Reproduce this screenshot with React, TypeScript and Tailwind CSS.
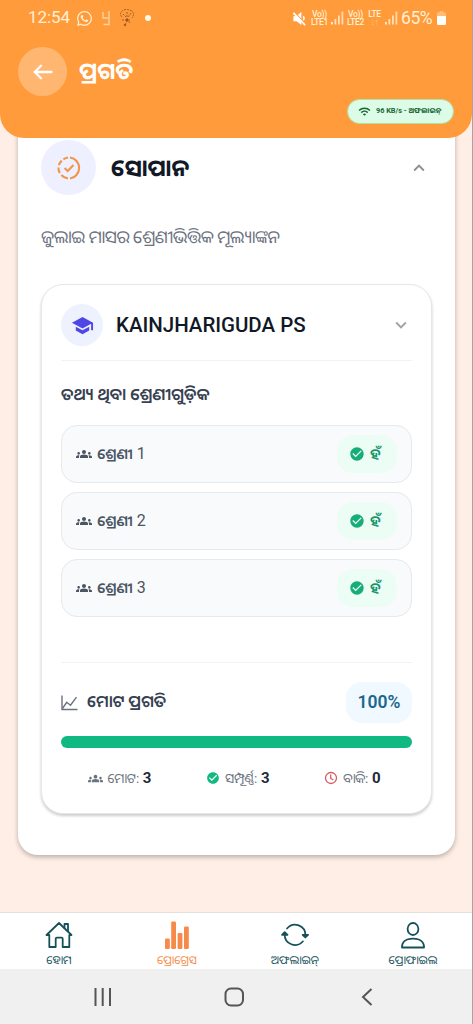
import React from "react";
import { MdCheckCircle, MdExpandLess, MdExpandMore, MdGroups, MdSchool, MdWifi } from "react-icons/md";
import { FaWhatsapp } from "react-icons/fa";

interface IconProps {
  className?: string;
}

interface NavItem {
  name: string;
  icon: React.FC<IconProps>;
  color: string;
}

function BackIcon({ className }: IconProps) {
  return (
    <svg viewBox="0 0 20 20" className={className} fill="none" stroke="currentColor" strokeWidth="2.3" strokeLinecap="round" strokeLinejoin="round">
      <path d="M18.5 10h-17M8 3.8 1.800 10 8 16.2" />
    </svg>
  );
}

function MutedIcon({ className }: IconProps) {
  return (
    <svg viewBox="0 0 16 16" className={className}>
      <path d="M1.5 5.2h3.3L10 1v14l-5.2-4H1.5z" fill="currentColor" />
      <path d="M12 5.5q1.8 2 0 4.5" fill="none" stroke="currentColor" strokeWidth="1.5" />
      <path d="M2.5 1.2 15 14.2" fill="none" stroke="#ff9b3b" strokeWidth="1.2" />
      <path d="m1.5 2 12.5 13" fill="none" stroke="currentColor" strokeWidth="1.8" />
    </svg>
  );
}

function SignalIcon({ className }: IconProps) {
  return (
    <svg viewBox="0 0 13 14" className={className} fill="currentColor">
      <rect x="0" y="11" width="1.8" height="2.5" />
      <rect x="3.5" y="8" width="1.8" height="5.5" opacity="0.85" />
      <rect x="7" y="4.5" width="1.8" height="9" opacity="0.8" />
      <rect x="10.5" y="0.5" width="1.8" height="13" opacity="0.75" />
    </svg>
  );
}

function ProgressCheckIcon({ className }: IconProps) {
  return (
    <svg viewBox="0 0 24 24" className={className} fill="none" stroke="currentColor" strokeWidth="2.1">
      <path d="M13 1.5a10.6 10.6 0 0 1 0 21" />
      <path d="M11 1.5a10.5 10.5 0 0 0-4.6 1.8M4.8 4.6A10.7 10.7 0 0 0 1.8 9.2M1.4 11.5A10.7 10.7 0 0 0 2.8 17M4.3 19A10.7 10.7 0 0 0 11 22.5" />
      <path d="m7.6 12 3.1 3.1 5.8-6" />
    </svg>
  );
}

function LineChartIcon({ className }: IconProps) {
  return (
    <svg viewBox="0 0 17 16" className={className} fill="none" stroke="currentColor" strokeWidth="1.4">
      <path d="M1 .5v14h15.5" />
      <path d="m1.5 13.5 4.2-6.2 3.8 2.9 6-8" />
    </svg>
  );
}

function ClockIcon({ className }: IconProps) {
  return (
    <svg viewBox="0 0 14 14" className={className} fill="none" stroke="currentColor" strokeWidth="1.3">
      <circle cx="7" cy="7" r="5.5" />
      <path d="M6.7 3.5v3.7L9.3 9" />
    </svg>
  );
}

function HomeIcon({ className }: IconProps) {
  return (
    <svg viewBox="0 0 28 28" className={className} fill="none" stroke="currentColor" strokeWidth="1.8" strokeLinejoin="round" strokeLinecap="round">
      <path d="M1.5 14 14 2l12.5 12h-2.2v12h-6.6v-8.2q0-1.2-1.2-1.2h-4.6q-1.2 0-1.2 1.2V26H4.3V14z" />
      <path d="M19.5 7V3H23v7" />
    </svg>
  );
}

function BarsIcon({ className }: IconProps) {
  return (
    <svg viewBox="0 0 28 28" className={className} fill="currentColor">
      <rect x="2" y="17.5" width="4.8" height="10.5" rx="1.2" />
      <rect x="8.2" y="0.5" width="4.8" height="27.5" rx="1.2" />
      <rect x="14.6" y="12" width="4.8" height="16" rx="1.2" />
      <rect x="21" y="5.5" width="4.8" height="22.5" rx="1.2" />
    </svg>
  );
}

function SyncIcon({ className }: IconProps) {
  return (
    <svg viewBox="0 0 28 28" className={className} fill="none" stroke="currentColor" strokeWidth="1.7" strokeLinecap="round" strokeLinejoin="round">
      <path d="M6 7.5A10.4 10.4 0 0 1 24.4 14.5" />
      <path d="M22 20.3A10.4 10.4 0 0 1 3.7 13" />
      <path d="m21.6 13.8 2.7 2.7 2.8-2.7zM1 13.8l2.7-2.7 2.8 2.7z" fill="currentColor" />
    </svg>
  );
}

function UserIcon({ className }: IconProps) {
  return (
    <svg viewBox="0 0 28 28" className={className} fill="none" stroke="currentColor" strokeWidth="1.8" strokeLinejoin="round">
      <ellipse cx="14" cy="8" rx="5.4" ry="6" />
      <path d="M3 26.5v-1.2q.6-5.2 5.2-6.8 5.8-1.8 11.6 0 4.6 1.6 5.2 6.8v1.2z" />
    </svg>
  );
}

const classes = ["1", "2", "3"];

const navItems: NavItem[] = [
  { name: "ହୋମ", icon: HomeIcon, color: "text-[#16505a]" },
  { name: "ପ୍ରୋଗ୍ରେସ", icon: BarsIcon, color: "text-[#f68a48]" },
  { name: "ଅଫଲାଇନ୍", icon: SyncIcon, color: "text-[#16505a]" },
  { name: "ପ୍ରୋଫାଇଲ", icon: UserIcon, color: "text-[#16505a]" },
];

function StatusBar() {
  return (
    <div className="flex h-9 items-center pl-7 pr-[26px] text-[#fff0d4]">
      <span className="w-[43px] text-[17px] tracking-[-0.1px]">12:54</span>
      <FaWhatsapp className="ml-[5px] size-[17px]" />
      <svg viewBox="0 0 10 16" className="ml-2 h-4 w-2.5" fill="none" stroke="#ffd09a" strokeWidth="1.5">
        <path d="M2 2v6h6M8 1v13.5H2.5" />
      </svg>
      <svg viewBox="0 0 16 18" className="ml-2 h-[18px] w-4" fill="none" stroke="#a85f24" strokeWidth="1">
        <path d="M3 8Q0 5 3 2q4-3 10 0 3 3 0 7M4 5l3 3M12 4 9 8M8 3v8M3 11h9M6 16l2-4 4 2" strokeDasharray="2 1" />
        <circle cx="8" cy="11" r="1" fill="#42240f" />
        <circle cx="6" cy="16" r=".8" fill="#42240f" />
      </svg>
      <span className="ml-2.5 size-1.5 rounded-full bg-[#fff7e8]" />
      <div className="ml-auto flex items-center">
        <MutedIcon className="mr-[3px] size-[15px] text-white" />
        <div className="w-[19px] whitespace-nowrap text-center text-[8.5px] font-medium leading-[8px] tracking-[-0.3px]">
          <div>Vo))</div>
          <div>LTE1</div>
        </div>
        <SignalIcon className="ml-0.5 h-3.5 w-[13px]" />
        <div className="ml-0.5 w-[19px] whitespace-nowrap text-center text-[8.5px] font-medium leading-[8px] tracking-[-0.3px]">
          <div>Vo))</div>
          <div>LTE2</div>
        </div>
        <div className="ml-0.5 w-[15px] text-center text-[8.5px] font-medium leading-[8px] tracking-[-0.3px]">
          <div>LTE</div>
          <div className="text-[#ffc98f]">↓↑</div>
        </div>
        <SignalIcon className="ml-[3px] h-3.5 w-[13px]" />
        <span className="ml-[3px] w-[34px] text-[17.5px] tracking-[-0.4px]">65%</span>
        <svg viewBox="0 0 9 14" className="ml-0.5 h-3.5 w-[9px]" fill="currentColor">
          <path d="M2.5 0h4v1.5H9V6H0V1.5h2.5z" opacity=".4" />
          <path d="M0 5h9v7.5q0 1.5-1.5 1.5h-6Q0 14 0 12.500z" fill="#fff" />
        </svg>
      </div>
    </div>
  );
}

function Header() {
  return (
    <header className="relative z-10 h-[138px] shrink-0 rounded-b-[24px] bg-[#ff9b3b]">
      <StatusBar />
      <div className="flex items-center pl-[18px] pt-[11px] text-white">
        <div className="flex size-[49px] items-center justify-center rounded-full bg-[#ffb670]">
          <BackIcon className="size-5" />
        </div>
        <h1 className="-mt-0.5 ml-3 whitespace-nowrap text-[23.3px] font-bold leading-9">ପ୍ରଗତି</h1>
      </div>
      <div className="mr-[18px] mt-[3px] flex justify-end">
        <div className="flex h-[25px] w-[107px] items-center rounded-full border border-[#b4dfa0] bg-[#dcfce7] pl-[10px] text-[#166534]">
          <MdWifi className="size-[13px]" />
          <span className="ml-[5px] whitespace-nowrap text-[7.3px] font-bold">96 KB/s - ଅଫଲାଇନ୍</span>
        </div>
      </div>
    </header>
  );
}

function ClassRow({ label }: { label: string }) {
  return (
    <div className="flex h-[58px] items-center rounded-2xl border border-[#e6e9ed] bg-[#f8fafc] pl-3.5 pr-3.5 text-[#4b5563]">
      <MdGroups className="size-4" />
      <span className="ml-[5px] whitespace-nowrap text-[14.6px] font-semibold leading-6">ଶ୍ରେଣୀ</span>
      <span className="ml-1 text-base">{label}</span>
      <div className="ml-auto flex h-[38px] w-[60px] items-center rounded-2xl bg-[#ecfdf5] pl-3">
        <MdCheckCircle className="size-4 text-[#17ad7b]" />
        <span className="ml-[5px] text-[14.6px] font-semibold leading-6 text-[#13946a]">ହଁ</span>
      </div>
    </div>
  );
}

function SchoolCard() {
  return (
    <section className="mt-[29px] h-[530px] rounded-[22px] border border-[#e7e7e9] bg-white px-[19px] shadow-[0_2px_3px_rgba(0,0,0,0.2)]">
      <div className="flex h-[76px] items-center border-b border-[#f1f2f4] pt-[5px]">
        <div className="flex size-[42px] items-center justify-center rounded-full bg-[#eef2ff]">
          <MdSchool className="size-[23px] text-[#4f46e5]" />
        </div>
        <span className="ml-[13px] whitespace-nowrap text-[20.5px] font-medium tracking-[-0.03px] text-[#111827]">KAINJHARIGUDA PS</span>
        <MdExpandMore className="ml-auto size-[22px] text-[#a3a3a3]" />
      </div>
      <div className="flex h-16 items-center pt-1 text-[#374151]">
        <h3 className="whitespace-nowrap text-[16.7px] font-semibold leading-7">ତଥ୍ୟ ଥିବା ଶ୍ରେଣୀଗୁଡ଼ିକ</h3>
      </div>
      <div className="flex flex-col gap-[9px]">
        {classes.map((item) => (
          <ClassRow key={item} label={item} />
        ))}
      </div>
      <div className="mt-[45px] border-t border-[#f1f2f4] pt-[19px]">
        <div className="flex h-[41px] items-center">
          <LineChartIcon className="h-4 w-[17px] text-[#6b7280]" />
          <span className="-mt-0.5 ml-[9px] whitespace-nowrap text-[16.4px] font-semibold leading-7 text-[#374151]">ମୋଟ ପ୍ରଗତି</span>
          <div className="ml-auto flex h-[41px] w-[66px] items-center justify-center rounded-2xl bg-[#f0f9ff] text-[17.5px] font-semibold text-[#1c678d]">
            100%
          </div>
        </div>
        <div className="mt-[13px] h-3 rounded-full bg-[#10b981]" />
        <div className="mt-[15px] flex h-[30px] items-center justify-around pr-1 text-[#6b7280]">
          <div className="flex items-center">
            <MdGroups className="size-[15px]" />
            <span className="ml-1 whitespace-nowrap text-[13.5px] leading-6 tracking-[-0.4px]">ମୋଟ:</span>
            <span className="ml-1 text-[15px] font-bold text-[#1f2937]">3</span>
          </div>
          <div className="flex items-center">
            <MdCheckCircle className="size-3.5 text-[#10b981]" />
            <span className="ml-[5px] whitespace-nowrap text-[13.5px] leading-6 tracking-[-0.4px]">ସମ୍ପୂର୍ଣ୍ଣ:</span>
            <span className="ml-1 text-[15px] font-bold text-[#1f2937]">3</span>
          </div>
          <div className="flex items-center">
            <ClockIcon className="size-3.5 text-[#d75b62]" />
            <span className="ml-[5px] whitespace-nowrap text-[13.5px] leading-6 tracking-[-0.4px]">ବାକି:</span>
            <span className="ml-1 text-[15px] font-bold text-[#1f2937]">0</span>
          </div>
        </div>
      </div>
    </section>
  );
}

function BottomNav() {
  return (
    <nav className="grid h-[57px] shrink-0 grid-cols-4 border-t border-[#e3e0df] bg-white">
      {navItems.map((item) => (
        <div key={item.name} className={`flex flex-col items-center pt-2 ${item.color}`}>
          <item.icon className="size-7 shrink-0" />
          <span className="mt-0.5 whitespace-nowrap text-[11.6px] leading-[18px]">{item.name}</span>
        </div>
      ))}
    </nav>
  );
}

function SystemBar() {
  return (
    <div className="flex h-[55px] shrink-0 items-center bg-[#f0f0f0] pl-[94px] text-[#555]">
      <svg viewBox="0 0 18 18" className="size-[18px]" fill="none" stroke="currentColor" strokeWidth="2">
        <path d="M1.5 0v18M8.7 0v18M16 0v18" />
      </svg>
      <svg viewBox="0 0 20 20" className="ml-28 size-5" fill="none" stroke="currentColor" strokeWidth="2">
        <rect x="1.5" y="1.5" width="17.5" height="17" rx="5.5" />
      </svg>
      <svg viewBox="0 0 12 18" className="ml-[117px] h-[18px] w-3" fill="none" stroke="currentColor" strokeWidth="2">
        <path d="M10.5 1 2 9l8.5 8" />
      </svg>
    </div>
  );
}

export default function App() {
  return (
    <div className="flex h-[1024px] w-[473px] flex-col overflow-hidden border-r border-[#aaa3a0] bg-[#feeee5] font-[Roboto,'Noto_Sans_Oriya','Noto_Sans',sans-serif]">
      <Header />
      <main className="-mt-5 min-h-0 flex-1">
        <div className="ml-[18px] h-[737px] w-[437px] rounded-b-[20px] bg-white px-[23px] pt-[22px] shadow-[0_2px_5px_rgba(0,0,0,0.28)]">
          <div className="flex h-[55px] items-center">
            <div className="flex size-[55px] items-center justify-center rounded-full bg-[#eef0ff]">
              <ProgressCheckIcon className="size-6 text-[#f2944a]" />
            </div>
            <h2 className="ml-[15px] whitespace-nowrap text-[23.4px] font-bold leading-9 text-[#111827]">ସୋପାନ</h2>
            <MdExpandLess className="ml-auto mr-0.5 size-[22px] text-[#8e8e8e]" />
          </div>
          <div className="mt-6 flex h-9 items-center text-[#6b7280]">
            <p className="whitespace-nowrap text-[17.5px] leading-8 tracking-[-0.45px]">ଜୁଲାଇ ମାସର ଶ୍ରେଣୀଭିତ୍ତିକ ମୂଲ୍ୟାଙ୍କନ</p>
          </div>
          <SchoolCard />
        </div>
      </main>
      <BottomNav />
      <SystemBar />
    </div>
  );
}
